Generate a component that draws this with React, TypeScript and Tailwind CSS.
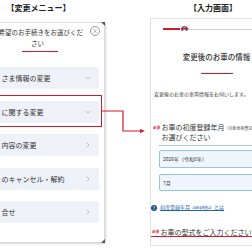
import React from "react";
import { ChevronDown, ChevronRight } from "lucide-react";

type MenuItem = { label: string; open: boolean; active?: boolean };

const items: MenuItem[] = [
  { label: "さま情報の変更", open: true },
  { label: "に関する変更", open: true, active: true },
  { label: "内容の変更", open: false },
  { label: "のキャンセル・解約", open: false },
  { label: "合せ", open: false },
];

const Badge: React.FC = () => (
  <span className="text-[3.5px] leading-[4px] font-bold text-[#d3182f] mr-[1.5px] shrink-0">
    必須
  </span>
);

const Car: React.FC = () => (
  <svg width="9" height="6" viewBox="0 0 9 6" className="-mt-[3px] shrink-0">
    <path d="M1 4 L1.6 2.4 L3 1 L6 1 L7.4 2.4 L8 4 Z" fill="#c0394b" />
    <rect x="0.5" y="3.4" width="8" height="1.2" fill="#8a2d3a" />
    <circle cx="2.4" cy="4.9" r="0.9" fill="#333" />
    <circle cx="6.6" cy="4.9" r="0.9" fill="#333" />
    <rect x="3.3" y="1.6" width="2.4" height="1" fill="#9fc4e8" />
  </svg>
);

const MenuCard: React.FC = () => (
  <div className="relative mt-[6px] bg-white border border-[#dcdcdc] rounded-[2px] shadow-[1px_1px_2px_rgba(0,0,0,0.18)] pt-[3.5px] pb-[19px]">
    <div className="absolute top-[3px] right-[4px] w-[10px] h-[10px] rounded-full border border-[#9a9a9a] flex items-center justify-center text-[6px] leading-none text-[#777]">
      ×
    </div>
    <svg width="4" height="4" viewBox="0 0 4 4" className="absolute -top-[1px] -right-[1px]">
      <path d="M0 0 L4 0 L4 4 Z" fill="#555" />
    </svg>
    <svg width="4" height="4" viewBox="0 0 4 4" className="absolute -bottom-[1px] -right-[1px]">
      <path d="M4 0 L4 4 L0 4 Z" fill="#555" />
    </svg>
    <p className="pl-[4px] pr-[10px] text-center text-[6.5px] leading-[11px] text-[#333] whitespace-nowrap">
      ご希望のお手続きをお選びくだ
      <br />
      さい
    </p>
    <div className="ml-[45px] mt-[2px] w-[36px] h-[1.5px] bg-[#d3182f]" />
    <div className="mt-[15px] mx-[5px] flex flex-col gap-[11.5px]">
      {items.map((item) => (
        <div
          key={item.label}
          className="relative h-[22px] bg-[#eef1f8] rounded-[2px] flex items-center justify-between pl-[19.5px] pr-[7px]"
        >
          <span className="text-[7px] leading-[22px] text-[#333]">{item.label}</span>
          {item.open ? (
            <ChevronDown size={8} strokeWidth={1.4} color="#8a8a8a" />
          ) : (
            <ChevronRight size={8} strokeWidth={1.4} color="#8a8a8a" />
          )}
          {item.active && (
            <div className="absolute -top-[5.5px] -bottom-[4.5px] -left-[3px] -right-[3px] border-[1.5px] border-[#d3182f]" />
          )}
        </div>
      ))}
    </div>
  </div>
);

const InputCard: React.FC = () => (
  <div className="mt-[2px] bg-white border-l border-t border-b border-[#e2e2e2] pb-[8px]">
    <div className="mt-[4px] h-[12px] flex items-center pl-[12px]">
      <div className="w-[17px] h-[1.5px] bg-[#d3182f]" />
      <Car />
      <div className="flex-1 h-[1px] bg-[#cfcfcf]" />
    </div>
    <p className="mt-[17px] text-center text-[7.5px] leading-[10px] font-medium text-[#333] whitespace-nowrap">
      変更後のお車の情報
    </p>
    <div className="mx-auto mt-[10.5px] w-[32px] h-[1.5px] bg-[#d3182f]" />
    <p className="mt-[16px] pl-[3px] text-[5px] leading-[7px] text-[#444] whitespace-nowrap">
      変更後のお車の車両情報をお伺いします。
    </p>
    <div className="mt-[26px] flex items-start pl-[2px]">
      <div className="h-[9px] flex items-center">
        <Badge />
      </div>
      <p className="text-[7px] leading-[9px] text-[#333] whitespace-nowrap">
        お車の初度登録年月
        <span className="text-[4px] text-[#666]">（自動車検査証記載）</span>
        <br />
        お選びください
      </p>
    </div>
    <div className="ml-[8px] mt-[2.5px] h-[1px] bg-[#a8d0ea]" />
    <div className="ml-[8px] mt-[4px] h-[18px] rounded-[2px] bg-[#eef6fc] border border-[#93c5e6] flex items-center pl-[3px]">
      <span className="text-[5px] leading-none text-[#333]">2026年（令和8年）</span>
    </div>
    <div className="ml-[8px] mt-[6px] h-[17px] rounded-[2px] bg-[#eef6fc] border border-[#93c5e6] flex items-center pl-[3px]">
      <span className="text-[5px] leading-none text-[#333]">7月</span>
    </div>
    <div className="mt-[13px] h-[8px] flex items-center pl-[0px]">
      <span className="w-[6px] h-[6px] rounded-full bg-[#1f4e8c] text-white text-[4.5px] leading-[6px] text-center font-bold shrink-0">
        ?
      </span>
      <span className="ml-[3px] text-[5px] leading-[8px] text-[#2563a8] underline whitespace-nowrap">
        初度登録年月
        <span className="text-[3px]">（自動車検査証）</span>
        とは
      </span>
    </div>
    <div className="mt-[16.5px] h-[9px] flex items-center pl-[1px] border-b border-[#d3182f]">
      <Badge />
      <span className="text-[7px] leading-[9px] text-[#333] whitespace-nowrap">
        お車の型式をご入力ください
      </span>
    </div>
  </div>
);

export default function App() {
  return (
    <div
      className="relative w-[252px] h-[248px] overflow-hidden bg-white"
      style={{ fontFamily: '"Noto Sans CJK JP", "Noto Sans", sans-serif' }}
    >
      <div className="flex items-start -ml-[24px]">
        <div className="w-[129px] shrink-0">
          <h2 className="h-[16px] pr-[4px] text-center text-[8px] leading-[16px] font-bold text-[#222]">
            【変更メニュー】
          </h2>
          <MenuCard />
        </div>
        <div className="ml-[45px] w-[132px] shrink-0">
          <h2 className="h-[16px] pr-[6px] text-center text-[8px] leading-[16px] font-bold text-[#222]">
            【入力画面】
          </h2>
          <InputCard />
        </div>
      </div>
      <svg
        className="absolute left-0 top-0 pointer-events-none"
        width="252"
        height="248"
        viewBox="0 0 252 248"
      >
        <polyline
          points="102,111 123,111 123,131 141,131"
          fill="none"
          stroke="#d3182f"
          strokeWidth="1.2"
        />
        <path d="M140 129 L145 131 L140 133 Z" fill="#d3182f" />
      </svg>
    </div>
  );
}
